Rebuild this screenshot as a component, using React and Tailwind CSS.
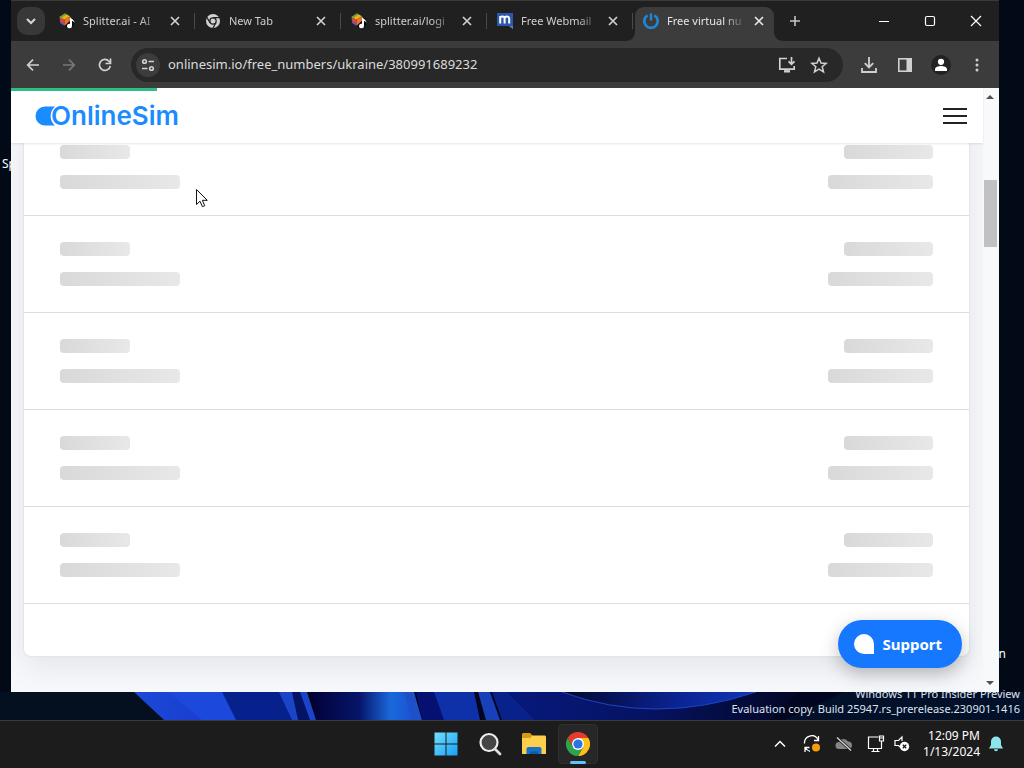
import React from "react";

const splitter = "splitter";
const tabs = [
  { title: "Splitter.ai - AI", icon: splitter },
  { title: "New Tab", icon: "chrome" },
  { title: "splitter.ai/logi", icon: splitter },
  { title: "Free Webmail", icon: "mail" },
  { title: "Free virtual nu", icon: "power", active: true },
];

function Favicon({ kind }) {
  if (kind === "chrome")
    return (
      <svg className="size-4 shrink-0" viewBox="0 0 16 16" fill="none" aria-hidden="true">
        <circle cx="8" cy="8" r="7" fill="#d0d0d0" />
        <circle cx="8" cy="8" r="3.8" fill="#202020" />
        <circle cx="8" cy="8" r="2.5" fill="#d0d0d0" />
        <path d="M8 4.6h6.4M5 9.8 1.9 4.4M11 9.8l-3.2 5.4" stroke="#202020" strokeWidth="1.2" />
      </svg>
    );
  if (kind === "mail")
    return (
      <svg className="size-4 shrink-0" viewBox="0 0 16 16" fill="none" aria-hidden="true">
        <path d="M0 0h16v16l-4-3H0z" fill="#2c58ac" />
        <path d="M12 13h4v3z" fill="#5b7fc4" />
        <path d="M3.2 10.5V3M3.2 5.500c0-2.600 4.400-2.600 4.400 0v5M7.600 5.500c0-2.600 4.600-2.600 4.600 0v5" stroke="#fff" strokeWidth="2" />
      </svg>
    );
  if (kind === "power")
    return (
      <svg className="size-4 shrink-0" viewBox="0 0 16 16" fill="none" aria-hidden="true">
        <path d="M4.6 2.4a6.7 6.7 0 1 0 6.8 0" stroke="#1f87d6" strokeWidth="2.6" />
        <path d="M8 .3v7.2" stroke="#1f87d6" strokeWidth="2.4" />
      </svg>
    );
  return (
    <svg className="size-4 shrink-0" viewBox="0 0 16 16" aria-hidden="true">
      <circle cx="10" cy="9.500" r="5.600" fill="#0d0d0d" />
      <path d="M.5 4 5.500 6.800 5.800 12.500 1.200 9.500z" fill="#d94a2b" />
      <path d="M.8 7.400 5.600 10.200 5.800 13 1.400 10.300z" fill="#7b4fb0" />
      <path d="M.5 4 6 .6l5 2.600-5.500 3.600z" fill="#e9b21c" />
      <path d="M.5 4 6 .6l1.600.8L2.200 5z" fill="#59a845" />
      <path d="M5.500 6.800 11 3.200v4.600l-5.200 4.700z" fill="#e8742a" />
      <path d="M11 3.5c.2 2.2 4.700 3 4.500 6.600-.6-1.600-1.700-2-2.500-2v4.800a2.500 2.200 0 1 1-2-2.100z" fill="#fff" />
    </svg>
  );
}

function Cross({ className }) {
  return (
    <svg className={className} viewBox="0 0 16 16" fill="none" stroke="currentColor" strokeWidth="1.7" aria-hidden="true">
      <path d="m4 4 8 8M12 4l-8 8" />
    </svg>
  );
}

function Tab({ tab }) {
  return (
    <div className={`relative flex h-[34px] w-[146px] min-w-0 items-center pb-1.5 pl-2 ${tab.active ? "text-[#e6e6e6]" : "text-[#cfcfcf]"}`}>
      {tab.active ? (
        <svg className="absolute -left-2.5 top-0 h-[34px] w-40" viewBox="0 0 160 34" fill="#3c3c3c" aria-hidden="true">
          <path d="M0 34c7 0 10-4 10-10V9c0-5 4-9 9-9h121c5 0 9 4 9 9v15c0 6 3 10 10 10z" />
        </svg>
      ) : (
        <span className="absolute right-0.5 top-1.5 h-4 w-px bg-[#4a4a4a]" />
      )}
      <div className="relative flex min-w-0 flex-1 items-center gap-2 pr-3.5">
        <Favicon kind={tab.icon} />
        <span className="min-w-0 flex-1 whitespace-nowrap text-[11px] leading-4 [mask-image:linear-gradient(to_right,black_75%,transparent_104%)]">
          {tab.title}
        </span>
        <button type="button" aria-label={`Close ${tab.title}`} className="shrink-0">
          <Cross className="size-4" />
        </button>
      </div>
    </div>
  );
}

function IconButton({ label, className = "", children }) {
  return (
    <button type="button" aria-label={label} className={`flex size-9 shrink-0 items-center justify-center ${className}`}>
      {children}
    </button>
  );
}

const line = { fill: "none", stroke: "currentColor", strokeWidth: 2, "aria-hidden": true };

function TabStrip() {
  return (
    <div className="flex h-[41px] border-t border-[#3a3a3a] bg-[#202020] pt-1.5 text-[#d6d6d6]">
      <button type="button" aria-label="Search tabs" className="ml-1.5 flex size-7 shrink-0 items-center justify-center rounded-[10px] bg-[#383838]">
        <svg className="size-4" viewBox="0 0 16 16" {...line}>
          <path d="m4 6 4 4 4-4" />
        </svg>
      </button>
      <div className="ml-1.5 flex min-w-0">
        {tabs.map((tab) => (
          <Tab key={tab.title} tab={tab} />
        ))}
      </div>
      <IconButton label="New tab" className="-ml-1 -mt-1">
        <svg className="size-4 text-[#c4c4c4]" viewBox="0 0 16 16" {...line}>
          <path d="M8 3v10M3 8h10" strokeWidth="1.6" />
        </svg>
      </IconButton>
      <div className="-mt-1.5 ml-auto flex h-[39px] text-white">
        <button type="button" aria-label="Minimize" className="flex w-[46px] items-center justify-center">
          <svg className="size-3" viewBox="0 0 12 12" {...line}>
            <path d="M1 6.5h10" strokeWidth="1" />
          </svg>
        </button>
        <button type="button" aria-label="Maximize" className="flex w-[46px] items-center justify-center">
          <svg className="size-3" viewBox="0 0 12 12" {...line}>
            <rect x="1.5" y="1.5" width="9" height="9" rx="1.5" strokeWidth="1.2" />
          </svg>
        </button>
        <button type="button" aria-label="Close window" className="flex w-[46px] items-center justify-center">
          <svg className="size-3" viewBox="0 0 12 12" {...line}>
            <path d="m1 1 10 10M11 1 1 11" strokeWidth="1.2" />
          </svg>
        </button>
      </div>
    </div>
  );
}

function Toolbar() {
  return (
    <div className="flex h-[47px] items-center bg-[#3c3c3c] px-1 text-[#d0d0d0]">
      <IconButton label="Back">
        <svg className="size-4" viewBox="0 0 16 16" {...line}>
          <path d="M14 8H3M8 2.7 2.7 8 8 13.3" strokeWidth="1.7" />
        </svg>
      </IconButton>
      <IconButton label="Forward" className="text-[#777]">
        <svg className="size-4" viewBox="0 0 16 16" {...line}>
          <path d="M2 8h11M8 2.7 13.3 8 8 13.3" strokeWidth="1.7" />
        </svg>
      </IconButton>
      <IconButton label="Reload">
        <svg className="size-4" viewBox="0 0 16 16" {...line}>
          <path d="M13.300 9A5.500 5.500 0 1 1 12 4.200l1.200 1.300" strokeWidth="1.700" />
          <path d="M13.500 1.500v5H8.500" strokeWidth="1.700" />
        </svg>
      </IconButton>
      <div className="ml-2 mr-2 flex h-[34px] min-w-0 flex-1 items-center rounded-full bg-[#282828] pl-[5px] pr-2">
        <button type="button" aria-label="View site information" className="flex size-6 shrink-0 items-center justify-center rounded-full bg-[#3c3c3c]">
          <svg className="size-4" viewBox="0 0 16 16" {...line}>
            <g strokeWidth="1.600">
              <circle cx="4.500" cy="4.500" r="1.800" />
              <path d="M8.500 4.500H14M2 11.500h5.500" />
              <circle cx="11.500" cy="11.500" r="1.800" />
            </g>
          </svg>
        </button>
        <input
          aria-label="Address"
          className="ml-2 min-w-0 flex-1 bg-transparent text-[13px] text-[#dcdcdc] outline-none"
          defaultValue="onlinesim.io/free_numbers/ukraine/380991689232"
        />
        <button type="button" aria-label="Install app" className="flex w-8 shrink-0 justify-center">
          <svg className="size-[18px]" viewBox="0 0 18 18" {...line}>
            <path d="M9 2.500H1.800v10.700h14.400V10" strokeWidth="1.700" />
            <path d="M13.500 1v7M10.500 5.300l3 3 3-3" strokeWidth="1.700" />
            <path d="M6 15.300h6" strokeWidth="2.400" />
          </svg>
        </button>
        <button type="button" aria-label="Bookmark this page" className="flex w-8 shrink-0 justify-center">
          <svg className="size-[18px]" viewBox="0 0 18 18" {...line}>
            <path d="m9 2.200 2 4.800 5.200.4-4 3.400 1.300 5.100L9 13.200l-4.500 2.700 1.300-5.100-4-3.400L7 7z" strokeWidth="1.500" />
          </svg>
        </button>
      </div>
      <IconButton label="Downloads">
        <svg className="size-[18px]" viewBox="0 0 18 18" {...line}>
          <path d="M9 1v10M4.800 7.200 9 11.400l4.200-4.200M2 12v4h14v-4" strokeWidth="1.800" />
        </svg>
      </IconButton>
      <IconButton label="Side panel">
        <svg className="size-4" viewBox="0 0 16 16" {...line}>
          <rect x="1.800" y="1.800" width="12.400" height="12.400" strokeWidth="1.600" />
          <path d="M9.500 1.800h4.700v12.400H9.500z" fill="currentColor" stroke="none" />
        </svg>
      </IconButton>
      <IconButton label="Profile">
        <svg className="size-5" viewBox="0 0 20 20" aria-hidden="true">
          <circle cx="10" cy="10" r="10" fill="#222" />
          <circle cx="10" cy="6.800" r="3.100" fill="#fff" />
          <path d="M4 16v-1.800C4 12 7.500 11 10 11s6 1 6 3.200V16z" fill="#fff" />
        </svg>
      </IconButton>
      <IconButton label="Browser menu">
        <svg className="size-4" viewBox="0 0 16 16" fill="currentColor" aria-hidden="true">
          <circle cx="8" cy="3" r="1.500" />
          <circle cx="8" cy="8" r="1.500" />
          <circle cx="8" cy="13" r="1.500" />
        </svg>
      </IconButton>
    </div>
  );
}

const bar = "h-3.5 rounded bg-linear-to-r from-[#d9d9d9] to-[#e8e8e8]";

function SkeletonRow() {
  return (
    <li className="flex justify-between border-b border-[#dcdde0] px-9 py-[26px]">
      <div className="flex flex-col gap-4">
        <div className={`${bar} w-[70px]`} />
        <div className={`${bar} w-[120px]`} />
      </div>
      <div className="flex flex-col items-end gap-4">
        <div className={`${bar} w-[89px]`} />
        <div className={`${bar} w-[105px]`} />
      </div>
    </li>
  );
}

function Page() {
  return (
    <div className="relative flex min-h-0 flex-1 overflow-hidden bg-[#f6f8fb]">
      <div className="flex min-w-0 flex-1 flex-col">
        <header className="relative z-10 flex h-[55px] shrink-0 items-center justify-between bg-white pl-6 pr-4 shadow-[0_1px_2px_rgba(0,0,0,0.1)]">
          <span className="absolute left-0 top-0 h-[3px] w-[15%] bg-[#2ebd85]" />
          <a href="#home" aria-label="OnlineSim" className="flex items-center text-[#1a8cff]">
            <svg className="-mr-[5px] h-5 w-[21px]" viewBox="0 0 21 20" fill="currentColor" aria-hidden="true">
              <path d="M10 .500h10a12.500 12.500 0 0 0 0 19H10a9.500 9.500 0 0 1 0-19z" />
            </svg>
            <span className="font-['Inter',sans-serif] text-[26px] leading-8 font-semibold">OnlineSim</span>
          </a>
          <button type="button" aria-label="Menu" className="flex w-6 flex-col gap-[5px]">
            <span className="h-0.5 bg-[#222]" />
            <span className="h-0.5 bg-[#222]" />
            <span className="h-0.5 bg-[#222]" />
          </button>
        </header>
        <main className="pl-3 pr-[13px]">
          <ul className="-mt-6 rounded-lg border-x border-b border-[#e4e5e9] bg-white pb-[52px] shadow-[0_10px_30px_rgba(0,0,0,0.08)]">
            {[0, 1, 2, 3, 4].map((row) => (
              <SkeletonRow key={row} />
            ))}
          </ul>
        </main>
      </div>
      <div className="flex w-4 flex-col items-center justify-between bg-[#f8f9fa] py-[7px] pr-0.5" aria-hidden="true">
        <svg className="h-1 w-2" viewBox="0 0 8 4" fill="#505050">
          <path d="M0 4 4 0l4 4z" />
        </svg>
        <div className="mb-auto mt-[81px] h-[67px] w-[13px] bg-[#c1c1c3]" />
        <svg className="h-1 w-2" viewBox="0 0 8 4" fill="#505050">
          <path d="m0 0 4 4 4-4z" />
        </svg>
      </div>
      <button
        type="button"
        className="absolute bottom-6 right-[37px] z-20 flex h-12 items-center gap-2 rounded-full bg-[#1677ff] pl-4 pr-5 text-[15px] font-bold text-white shadow-[0_6px_18px_rgba(0,0,0,0.25)]"
      >
        <svg className="size-5" viewBox="0 0 20 20" fill="#fff" aria-hidden="true">
          <path d="M10 0a10 10 0 0 1 10 10v10H10a10 10 0 0 1 0-20z" />
        </svg>
        Support
      </button>
    </div>
  );
}

function Wallpaper() {
  return (
    <svg className="absolute inset-x-0 bottom-12 h-7 w-full" viewBox="0 0 1024 28" preserveAspectRatio="none" aria-hidden="true">
      <defs>
        <linearGradient id="petalA">
          <stop offset="0" stopColor="#1c49d8" />
          <stop offset="1" stopColor="#1a38c8" />
        </linearGradient>
        <linearGradient id="petalB">
          <stop offset="0" stopColor="#02023a" />
          <stop offset="0.45" stopColor="#06156a" />
          <stop offset="0.75" stopColor="#1a68dc" />
          <stop offset="1" stopColor="#1a4fd0" />
        </linearGradient>
        <linearGradient id="petalC">
          <stop offset="0" stopColor="#02062c" />
          <stop offset="0.6" stopColor="#0b2494" />
          <stop offset="1" stopColor="#1236b4" />
        </linearGradient>
        <linearGradient id="petalD">
          <stop offset="0" stopColor="#07197c" />
          <stop offset="0.5" stopColor="#061260" />
          <stop offset="1" stopColor="#020724" />
        </linearGradient>
      </defs>
      <path d="M0 0h1024v28H0z" fill="#03102a" />
      <path d="M0 0h180v28H0z" fill="#04101f" />
      <path d="M134 0h710l-60 28H164z" fill="#01051f" />
      <path d="M134 0h92l10 28h-72z" fill="url(#petalA)" />
      <path d="m168 0 34 28h35L224 0z" fill="#1d48dc" />
      <path d="M222 0h60l10 28h-56z" fill="#06208c" />
      <path d="M279 0h28l9 28h-24z" fill="#1b44c8" />
      <path d="m292 0 6 28h12L300 0z" fill="#041464" />
      <path d="M312 0h95l10 28H316z" fill="url(#petalB)" />
      <path d="m404 0 8 28h10L414 0z" fill="#2050c8" />
      <path d="M416 0h24l12 28h-30z" fill="#051070" />
      <path d="m434 0 10 28h36L474 0z" fill="#0e30a8" />
      <path d="m478 0 8 28h14L490 0z" fill="#1840b8" />
      <path d="m492 0 10 28h33L508 0z" fill="#09218a" />
      <path d="m508 0 27 28h235L800 0z" fill="url(#petalD)" />
      <path d="M562 0q92 34 194 0z" fill="url(#petalC)" />
      <path d="M562 0q92 34 194 0" fill="none" stroke="#1c44c4" strokeWidth="1" />
    </svg>
  );
}

function Taskbar() {
  return (
    <footer className="relative grid h-12 shrink-0 grid-cols-[1fr_auto_1fr] items-center border-t border-[#3a3a3a] bg-[#1c1c1c] pb-px text-white">
      <nav aria-label="Pinned apps" className="col-start-2 flex items-center gap-1">
        <IconButton label="Start" className="w-10">
          <svg className="size-6" viewBox="0 0 24 24" aria-hidden="true">
            <defs>
              <linearGradient id="start" x1="0" y1="0" x2="1" y2="1">
                <stop offset="0" stopColor="#6fe0ff" />
                <stop offset="1" stopColor="#189ff5" />
              </linearGradient>
            </defs>
            <path d="M.500.500h11v11H.500zM12.500.500h11v11h-11zM.500 12.500h11v11H.500zM12.500 12.500h11v11h-11z" fill="url(#start)" />
          </svg>
        </IconButton>
        <IconButton label="Search" className="w-10">
          <svg className="size-6" viewBox="0 0 24 24" aria-hidden="true">
            <circle cx="11" cy="10.500" r="8.500" fill="#454545" stroke="#eee" strokeWidth="2.200" />
            <path d="m17 17 5 5" stroke="#ddd" strokeWidth="2.800" strokeLinecap="round" />
          </svg>
        </IconButton>
        <IconButton label="File Explorer" className="w-10">
          <svg className="size-6" viewBox="0 0 24 24" aria-hidden="true">
            <path d="M0 2.500C0 1.700.600 1 1.500 1H8l2.500 2.500V9H0z" fill="#d99a12" />
            <path d="M0 6h8l2.500-2.500h12c.800 0 1.500.700 1.500 1.500v17H0z" fill="#fccf4d" />
            <path d="M4.500 22v-5c0-1.100.900-2 2-2h11c1.100 0 2 .900 2 2v5z" fill="#1672c4" />
            <path d="M8 22v-2.500h8V22z" fill="#0d5aa5" />
          </svg>
        </IconButton>
        <button type="button" aria-label="Google Chrome" className="relative flex size-10 items-center justify-center rounded border border-[#303030] bg-[#272727]">
          <svg className="size-6" viewBox="0 0 24 24" aria-hidden="true">
            <path d="M12 6h10.400A12 12 0 0 1 12 24l5.200-9z" fill="#fbc116" />
            <path d="M6.800 15 1.600 6A12 12 0 0 0 12 24l5.200-9z" fill="#2da44e" />
            <path d="M1.600 6A12 12 0 0 1 22.400 6H12a6 6 0 0 0-5.200 9z" fill="#e33b2e" />
            <circle cx="12" cy="12" r="6" fill="#fff" />
            <circle cx="12" cy="12" r="4.600" fill="#2b74e8" />
          </svg>
          <span className="absolute -bottom-px left-1/2 h-[3px] w-4 -translate-x-1/2 rounded-full bg-[#60c3f5]" />
        </button>
      </nav>
      <div className="flex items-center justify-end pr-5">
        <button type="button" aria-label="Show hidden icons" className="flex w-8 justify-center">
          <svg className="size-4" viewBox="0 0 16 16" {...line}>
            <path d="m3 10.500 5-5 5 5" strokeWidth="1.500" />
          </svg>
        </button>
        <button type="button" aria-label="Updates" className="flex w-8 justify-center">
          <svg className="size-[18px]" viewBox="0 0 18 18" {...line}>
            <path d="M1.500 8.500a7.200 7.200 0 0 1 13.500-4M15.500 1v4.500H11M6.500 12.500H2V17M2.300 12.800c1 1.800 2.700 3 4.700 3.500" strokeWidth="1.300" />
            <circle cx="13" cy="12.500" r="4" fill="#f59e0b" stroke="none" />
          </svg>
        </button>
        <button type="button" aria-label="OneDrive" className="flex w-8 justify-center">
          <svg className="size-[18px]" viewBox="0 0 18 18" {...line}>
            <path d="M4 14a3.500 3.500 0 0 1 0-7 5 5 0 0 1 9-.500A3.800 3.800 0 0 1 14 14z" fill="#858585" stroke="none" />
            <path d="m2 2.500 14 13" stroke="#1c1c1c" strokeWidth="3" />
            <path d="m2 2.500 14 13" stroke="#ddd" strokeWidth="1.200" />
          </svg>
        </button>
        <button type="button" aria-label="Network and sound" className="flex items-center gap-2 pl-[7px]">
          <svg className="size-[18px]" viewBox="0 0 18 18" {...line}>
            <path d="M11.500 2h-10v11.500h13V9M4.500 16.500h8M6.500 13.500v3M10.500 13.500v3" strokeWidth="1.200" />
            <path d="M12.500 1h4v5h-4zM14.500 6v3M12.500 3h4" strokeWidth="1.200" />
          </svg>
          <svg className="size-[18px]" viewBox="0 0 18 18" {...line}>
            <path d="M9 6V2L5.500 5.500H2v5h3.500L7 12" strokeWidth="1.200" />
            <circle cx="11.500" cy="11.500" r="4.700" fill="#fff" stroke="none" />
            <path d="m9.800 9.800 3.400 3.400M13.200 9.800l-3.400 3.400" stroke="#1c1c1c" strokeWidth="1.300" />
          </svg>
        </button>
        <div className="ml-3 mr-2 text-right text-xs leading-4">
          <div>12:09 PM</div>
          <div>1/13/2024</div>
        </div>
        <button type="button" aria-label="Notifications">
          <svg className="size-4" viewBox="0 0 16 16" fill="#8ee6ec" aria-hidden="true">
            <path d="M8 .500A5 5 0 0 0 3 5.500V9l-2 3.500h14L13 9V5.500A5 5 0 0 0 8 .500zM6 13.200h4a2 2 0 0 1-4 0z" />
          </svg>
        </button>
      </div>
    </footer>
  );
}

function Pointer() {
  return (
    <svg className="pointer-events-none absolute left-[196px] top-[188px] z-30 h-5 w-3" viewBox="0 0 12 20" fill="#fff" stroke="#111" strokeWidth="1" aria-hidden="true">
      <path d="M.500 1.500v15l3.500-3.300 2.400 5.500 2.300-1-2.300-5.400h4.900z" />
    </svg>
  );
}

export default function App() {
  return (
    <div className="relative flex h-screen flex-col overflow-hidden bg-[#020a18] font-['Noto_Sans',sans-serif]">
      <Wallpaper />
      <span className="absolute left-0.5 top-[156px] text-xs text-white">Sp</span>
      <span className="absolute bottom-[106px] right-[18px] text-xs text-white">n</span>
      <p className="absolute bottom-[52px] right-1 text-right text-[11px] leading-[15px] text-[#dde3ec]">
        Windows 11 Pro Insider Preview
        <br />
        Evaluation copy. Build 25947.rs_prerelease.230901-1416
      </p>
      <div className="relative mb-7 ml-[11px] mr-[25px] flex min-h-0 flex-1 flex-col overflow-hidden">
        <TabStrip />
        <Toolbar />
        <Page />
      </div>
      <Taskbar />
      <Pointer />
    </div>
  );
}
